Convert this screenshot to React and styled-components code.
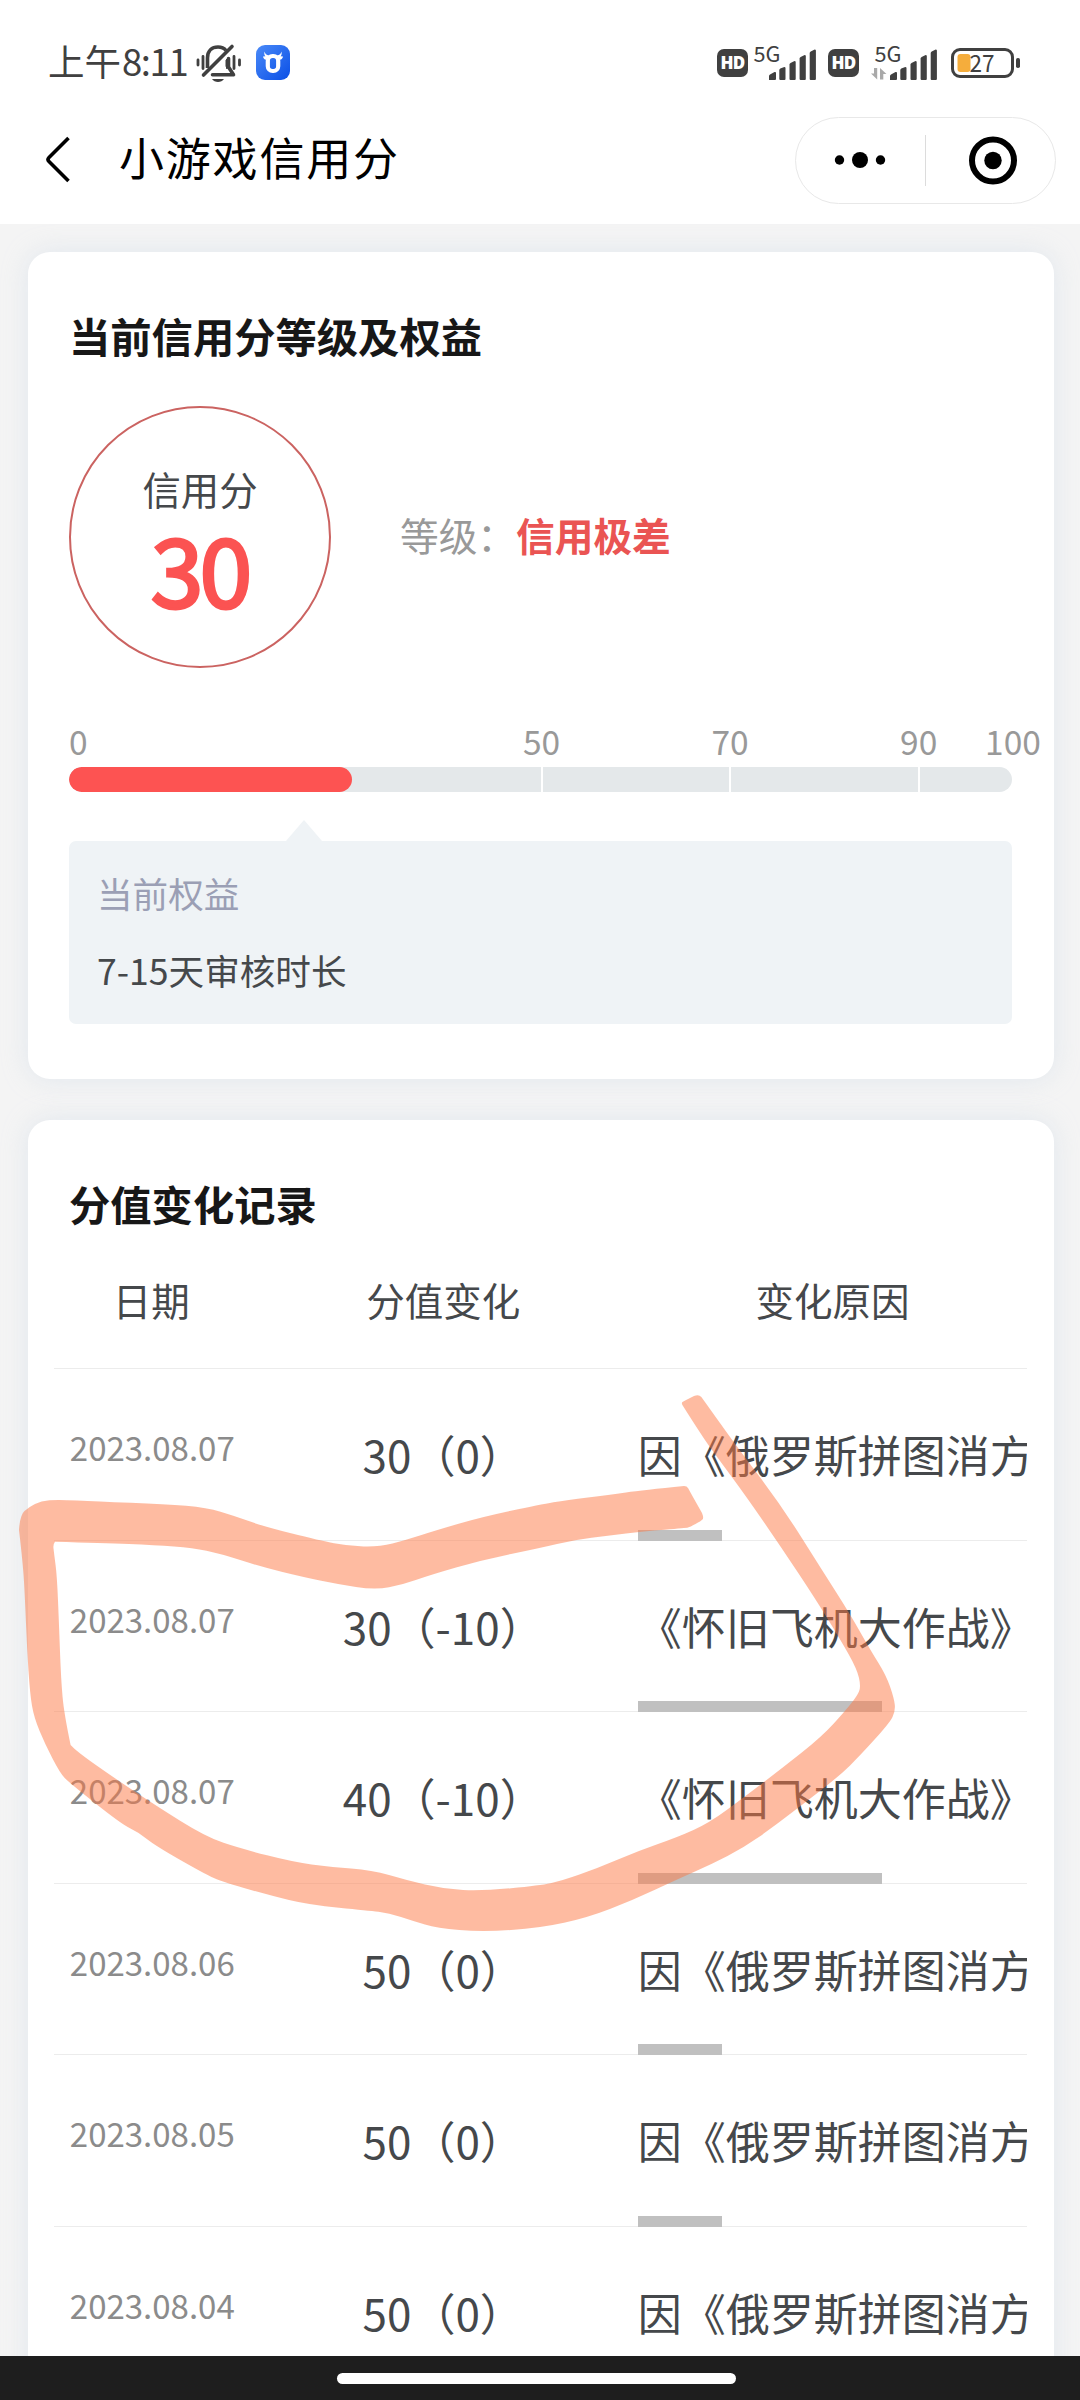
import styled, { createGlobalStyle } from 'styled-components'

const GlobalStyle = createGlobalStyle`
	* {
		box-sizing: border-box;
	}
	body {
		margin: 0;
		font-family: 'Noto Sans CJK SC', 'Noto Sans', sans-serif;
		color: #45484b;
		background-color: #f4f4f4;
	}
`
const Screen = styled.div`
	position: relative;
	display: flex;
	flex-direction: column;
	width: 1080px;
	height: 2400px;
	overflow: hidden;
	background-color: #f4f4f4;
`
const Header = styled.header`
	flex: none;
	background-color: #fff;
`
const StatusBar = styled.div`
	display: flex;
	align-items: center;
	justify-content: space-between;
	height: 96px;
	padding: 29px 60px 0 48px;
	color: #404040;
`
const StatusGroup = styled.div`
	display: flex;
	align-items: center;
`
const Clock = styled.div`
	width: 148px;
	font-size: 36.5px;
	line-height: 50px;
	white-space: nowrap;
	margin-top: -4px;
	span {
		letter-spacing: -1.4px;
		margin-left: 1px;
	}
`
const AppBadge = styled.svg`
	margin-left: 14px;
`
const HdBadge = styled.div`
	width: 31px;
	height: 28px;
	margin-right: ${props => props.$gap}px;
	border-radius: 7px;
	background-color: #404040;
	color: #fff;
	font: 800 17px/28px 'Open Sans', sans-serif;
	letter-spacing: -0.8px;
	text-align: center;
`
const Signal = styled.svg`
	margin-right: ${props => props.$gap}px;
	overflow: visible;
`
const Battery = styled.svg`
	display: block;
	overflow: visible;
`
const NavBar = styled.div`
	display: flex;
	align-items: center;
	height: 128px;
	padding: 0 24px 0 45px;
`
const NavTitle = styled.h1`
	flex: 1;
	margin: -7px 0 0 49px;
	font-size: 45px;
	font-weight: 400;
	line-height: 60px;
	letter-spacing: 1.8px;
	color: #000;
`
const Capsule = styled.div`
	display: flex;
	align-items: center;
	width: 261px;
	height: 87px;
	border: 1px solid #e8e8e8;
	border-radius: 44px;
`
const CapsuleDivider = styled.div`
	width: 1px;
	height: 51px;
	background-color: #dcdcdc;
`
const Main = styled.main`
	flex: 1;
	min-height: 0;
	overflow: hidden;
	display: flex;
	flex-direction: column;
	gap: 41px;
	padding: 28px 26px 0 28px;
`
const Card = styled.section`
	flex: none;
	padding: ${props => props.$padding};
	border-radius: 22px;
	background-color: #fff;
	box-shadow: 0 0 26px rgba(195, 210, 228, 0.38);
`
const CardTitle = styled.h2`
	margin: 0;
	padding-left: ${props => props.$indent || 0}px;
	font-size: 41.3px;
	font-weight: 700;
	line-height: 60px;
	color: #171717;
`
const Summary = styled.div`
	display: flex;
	align-items: center;
	margin-top: 41px;
`
const ScoreCircle = styled.div`
	display: flex;
	flex-direction: column;
	align-items: center;
	width: 262px;
	height: 262px;
	padding-top: 55px;
	border: 2px solid #cb6361;
	border-radius: 50%;
`
const ScoreLabel = styled.div`
	font-size: 38.4px;
	line-height: 50px;
`
const ScoreValue = styled.div`
	margin: 4px 0 0 -1px;
	font-size: 95px;
	line-height: 100px;
	letter-spacing: -4px;
	color: #fb5352;
	-webkit-text-stroke: 3px #fb5352;
`
const Level = styled.div`
	margin: -6px 0 0 69px;
	font-size: 38.7px;
	line-height: 50px;
	color: #999;
	strong {
		color: #ea5453;
	}
`
const Ticks = styled.div`
	display: flex;
	margin-top: 53px;
	font-size: 33.5px;
	line-height: 40px;
	color: #999;
`
const Tick = styled.div`
	flex: 0 0 ${props => props.$span}%;
	span {
		display: inline-block;
		transform: translateX(${props => (props.$first ? '0' : 'calc(-50% + 1px)')});
	}
`
const Track = styled.div`
	position: relative;
	display: flex;
	height: 25px;
	margin-top: 6px;
	border-radius: 13px;
	overflow: hidden;
	background-color: #e4e8ea;
`
const Segment = styled.div`
	flex: 0 0 ${props => props.$span}%;
	& + & {
		border-left: 2px solid #fff;
	}
`
const Fill = styled.div`
	position: absolute;
	top: 0;
	left: 0;
	width: ${props => props.$value}%;
	height: 100%;
	border-radius: 13px;
	background-color: #fd5352;
`
const Benefit = styled.div`
	position: relative;
	display: flex;
	flex-direction: column;
	gap: 27px;
	height: 183px;
	margin-top: 49px;
	padding: 27px 28px;
	border-radius: 7px;
	background-color: #eff3f6;
	font-size: 35.6px;
	line-height: 50px;
	&::before {
		content: '';
		position: absolute;
		left: 217px;
		bottom: 100%;
		border: 18px solid transparent;
		border-top: 0;
		border-bottom: 21px solid #eff3f6;
	}
`
const BenefitTitle = styled.div`
	color: #9b9fb5;
`
const columns = 'grid-template-columns: 1fr 2fr 2fr;'
const TableHead = styled.div`
	display: grid;
	${columns}
	align-items: center;
	height: 136px;
	padding-bottom: 4px;
	border-bottom: 1px solid #ececec;
	font-size: 38.5px;
	line-height: 50px;
	text-align: center;
`
const Row = styled.div`
	display: grid;
	${columns}
	height: 171.5px;
	border-bottom: 1px solid #ececec;
	font-size: 44px;
	line-height: 60px;
`
const DateCell = styled.div`
	padding: 53px 0 0 2px;
	font-size: 33px;
	line-height: 50px;
	text-align: center;
	color: #8b8b8b;
`
const ChangeCell = styled.div`
	padding-top: 55px;
	text-align: center;
`
const ReasonCell = styled.div`
	display: flex;
	flex-direction: column;
	justify-content: space-between;
	min-width: 0;
	padding-top: 55px;
`
const Reason = styled.div`
	overflow: hidden;
	white-space: nowrap;
`
const ScrollThumb = styled.div`
	width: ${props => props.$size}px;
	height: 11px;
	margin-bottom: -1px;
	background-color: #c0c0c0;
`
const GestureBar = styled.footer`
	flex: none;
	display: flex;
	align-items: center;
	justify-content: center;
	height: 44px;
	padding: 1px 7px 0 0;
	background-color: #1e1e1e;
	div {
		width: 399px;
		height: 11px;
		border-radius: 6px;
		background-color: #fff;
	}
`
const Marker = styled.svg`
	position: absolute;
	top: 0;
	left: 0;
	pointer-events: none;
`

const ticks = [
	{ label: '0', span: 50 },
	{ label: '50', span: 20 },
	{ label: '70', span: 20 },
	{ label: '90', span: 10 },
	{ label: '100', span: 0 }
]

const tetris = '因《俄罗斯拼图消方'
const plane = '《怀旧飞机大作战》'

const records = [
	{ date: '2023.08.07', change: '30（0）', reason: tetris, thumb: 84 },
	{ date: '2023.08.07', change: '30（-10）', reason: plane, thumb: 244 },
	{ date: '2023.08.07', change: '40（-10）', reason: plane, thumb: 244 },
	{ date: '2023.08.06', change: '50（0）', reason: tetris, thumb: 84 },
	{ date: '2023.08.05', change: '50（0）', reason: tetris, thumb: 84 },
	{ date: '2023.08.04', change: '50（0）', reason: tetris, thumb: 84 }
]

// edges of the highlighter stroke, each one is smoothed on its own so the corners stay sharp
const strokeEdges = [
	[[19, 1530], [20, 1515], [29, 1507], [41, 1501], [58, 1499.5], [96, 1501.5], [165, 1504], [207, 1507.7], [234, 1515.7], [262, 1526], [320, 1540.6], [348, 1546], [379, 1547], [406, 1540], [437, 1530], [482, 1517], [540, 1504.6], [567, 1500], [609, 1495], [643, 1490], [684, 1486]],
	[[684, 1486], [687, 1486], [689, 1490], [702, 1513]],
	[[702, 1513], [704, 1518], [701, 1521], [690, 1527], [686, 1528], [643, 1531.4], [609, 1535.6], [574, 1540], [540, 1548], [482, 1560], [430, 1575], [403, 1584.6], [375, 1590], [337, 1584], [303, 1577], [262, 1567], [220, 1553.6], [193, 1548], [155, 1545], [103, 1543], [55, 1541.7]],
	[[55, 1541.7], [53, 1544], [54, 1553], [57, 1576], [59, 1625], [61, 1679], [64, 1713.6], [70.6, 1745]],
	[[70.6, 1745], [76, 1751], [113.6, 1777.5], [155, 1805], [206, 1837], [241, 1848.7], [293, 1862], [330, 1867], [372, 1870], [406, 1880], [444, 1889], [482, 1891], [540, 1885.4], [561, 1881], [598, 1868], [638, 1851], [678, 1837], [709, 1823], [743, 1798], [781, 1769], [822, 1736.5], [846, 1710], [857, 1696], [861, 1687], [857, 1669], [840, 1639], [815.5, 1599], [781, 1547], [746.6, 1497], [715.6, 1455], [702, 1436], [683, 1406]],
	[[683, 1406], [681, 1403], [684, 1401], [694, 1396]],
	[[694, 1396], [699, 1394], [703.6, 1400], [736, 1445.7], [781, 1505], [822, 1570], [850, 1614], [870.6, 1650.4], [886, 1675], [894, 1698], [895.5, 1711], [889.5, 1723], [860, 1755.7], [839.6, 1775.6], [808.6, 1799.7], [774, 1826.5], [743, 1848], [712, 1864], [678, 1879], [633, 1900], [588, 1917.5], [540, 1928], [482, 1932], [437, 1928], [413, 1921], [389, 1913], [368, 1910.6], [310, 1905], [268, 1895], [220, 1881], [203, 1873], [155, 1845.6], [138, 1832], [122, 1824.5], [69, 1782.5], [60, 1773], [45, 1744], [34, 1717.4], [30, 1694], [27, 1648], [25, 1599], [23, 1564], [19, 1530]]
]

function smooth(points) {
	let d = ''
	for (let i = 1; i < points.length - 1; i++) {
		const [x, y] = points[i]
		const [nx, ny] = points[i + 1]
		const last = i === points.length - 2
		d += `Q${x} ${y} ${last ? nx : (x + nx) / 2} ${last ? ny : (y + ny) / 2}`
	}
	return d
}

const strokePath = `M19 1530${strokeEdges.map(smooth).join('')}Z`

function BellOffIcon() {
	return (
		<svg width="46" height="40" viewBox="0 0 46 40" fill="none" stroke="#404040" strokeWidth="3.6">
			<path d="M11.500 25V15C11.500 7.500 16 4 22 4c3 0 6 1 8 3.500" />
			<path d="M32.500 15.500v8.500l5 7.800H16.500" strokeLinejoin="round" strokeLinecap="round" />
			<path d="M30 17l1-1v10l-1-3z" strokeWidth="1" fill="#404040" />
			<path d="M7.500 32 36 3.500" strokeLinecap="round" />
			<path d="M16 36h12c-2.500 4-9.500 4-12 0z" fill="#404040" stroke="none" />
			<path d="M2 17v5M7 13.500v12M38 13.500v12M43.500 17v5" strokeWidth="2.800" strokeLinecap="round" />
		</svg>
	)
}

function CowIcon() {
	return (
		<AppBadge width="34" height="35" viewBox="0 0 34 35">
			<defs>
				<linearGradient id="cow" x1="0" y1="0" x2="1" y2="1">
					<stop offset="0" stopColor="#4a8af8" />
					<stop offset="1" stopColor="#0a4fe6" />
				</linearGradient>
			</defs>
			<rect width="34" height="35" rx="9" fill="url(#cow)" />
			<rect x="11.800" y="11" width="10.400" height="15" rx="4.800" fill="none" stroke="#fff" strokeWidth="4.200" />
			<path d="M8.600 6.500c-.5 2-.4 3.500.8 4.800L7 11.500c.3 2 1.500 3 3 3.200l3-4.200c-2.600-.4-4-1.700-4.400-4zM25.400 6.500c.5 2 .4 3.500-.8 4.800l2.400.2c-.3 2-1.500 3-3 3.200l-3-4.200c2.600-.4 4-1.700 4.400-4z" fill="#fff" />
		</AppBadge>
	)
}

function SignalIcon({ data, gap }) {
	return (
		<Signal $gap={gap} width="67" height="36" viewBox="0 0 67 36" fill="#404040">
			<text x="3.500" y="16.500" fontSize="21" fontFamily="'Noto Sans CJK SC', sans-serif" textLength="27" lengthAdjust="spacingAndGlyphs">5G</text>
			{data && (
				<g fill="#a9a9a9">
					<path d="M6.200 23v11.500L0 28.500h3V23zM9 34.500V23l6.500 6h-3.200v5.500z" />
				</g>
			)}
			<path d="M19 35v-4q0-1 1-1.500l4.500-2.500q1.500-.5 1.500 1V34q0 1-1 1z" />
			<path d="M29.300 34V25q0-1 1-1.500l4-1.500q1.200 0 1.200 1V34q0 1-1 1h-4.200q-1 0-1-1z" />
			<path d="M39.500 34V19.500q0-1 1-1.500l4-2q1.200 0 1.200 1V34q0 1-1 1h-4.200q-1 0-1-1z" />
			<path d="M49.600 34V13.500q0-1 1-1.500l4-2q1.200 0 1.200 1V34q0 1-1 1h-4.200q-1 0-1-1z" />
			<path d="M59.700 34V8q0-1 1-1.500l4-2q1.200 0 1.200 1V34q0 1-1 1h-4.200q-1 0-1-1z" />
		</Signal>
	)
}

function BatteryIcon() {
	return (
		<Battery width="69" height="30" viewBox="0 0 69 30">
			<rect x="1.500" y="1.500" width="60" height="27" rx="7.500" fill="none" stroke="#404040" strokeWidth="3" />
			<rect x="65" y="10" width="4" height="10" rx="1.800" fill="#404040" />
			<rect x="6.500" y="6" width="13" height="18" rx="3" fill="#f5ad3c" />
			<text x="18.500" y="24" fontSize="24" fontFamily="'Noto Sans CJK SC', sans-serif" fill="#404040" textLength="25" lengthAdjust="spacingAndGlyphs">27</text>
		</Battery>
	)
}

export default function App() {
	return (
		<Screen>
			<GlobalStyle />
			<Header>
				<StatusBar>
					<StatusGroup>
						<Clock>
							上午<span>8:11</span>
						</Clock>
						<BellOffIcon />
						<CowIcon />
					</StatusGroup>
					<StatusGroup>
						<HdBadge $gap={2}>HD</HdBadge>
						<SignalIcon gap={11} />
						<HdBadge $gap={12}>HD</HdBadge>
						<SignalIcon data gap={13} />
						<BatteryIcon />
					</StatusGroup>
				</StatusBar>
				<NavBar>
					<svg width="25" height="48" viewBox="0 0 25 48" fill="none" stroke="#000" strokeWidth="3.600">
						<path d="M23.500 2 4 21.500q-2 2 0 4L23.500 45" />
					</svg>
					<NavTitle>小游戏信用分</NavTitle>
					<Capsule>
						<svg width="129" height="60" viewBox="0 0 129 60">
							<circle cx="43.500" cy="30" r="4.700" />
							<circle cx="64" cy="30" r="8" />
							<circle cx="84.500" cy="30" r="4.700" />
						</svg>
						<CapsuleDivider />
						<svg width="129" height="60" viewBox="0 0 129 60">
							<circle cx="67" cy="30.500" r="21" fill="none" stroke="#000" strokeWidth="6" />
							<circle cx="67" cy="30.500" r="8.700" />
						</svg>
					</Capsule>
				</NavBar>
			</Header>
			<Main>
				<Card $padding="53px 42px 55px 41px">
					<CardTitle>当前信用分等级及权益</CardTitle>
					<Summary>
						<ScoreCircle>
							<ScoreLabel>信用分</ScoreLabel>
							<ScoreValue>30</ScoreValue>
						</ScoreCircle>
						<Level>
							等级：<strong>信用极差</strong>
						</Level>
					</Summary>
					<Ticks>
						{ticks.map((tick, i) => (
							<Tick key={tick.label} $span={tick.span} $first={i === 0}>
								<span>{tick.label}</span>
							</Tick>
						))}
					</Ticks>
					<Track>
						{ticks.slice(0, 4).map(tick => (
							<Segment key={tick.label} $span={tick.span} />
						))}
						<Fill $value={30} />
					</Track>
					<Benefit>
						<BenefitTitle>当前权益</BenefitTitle>
						<div>7-15天审核时长</div>
					</Benefit>
				</Card>
				<Card $padding="53px 27px 0 26px">
					<CardTitle $indent={15}>分值变化记录</CardTitle>
					<TableHead>
						<div>日期</div>
						<div>分值变化</div>
						<div>变化原因</div>
					</TableHead>
					{records.map((record, i) => (
						<Row key={i}>
							<DateCell>{record.date}</DateCell>
							<ChangeCell>{record.change}</ChangeCell>
							<ReasonCell>
								<Reason>{record.reason}</Reason>
								<ScrollThumb $size={record.thumb} />
							</ReasonCell>
						</Row>
					))}
				</Card>
			</Main>
			<GestureBar>
				<div />
			</GestureBar>
			<Marker width="1080" height="2400" viewBox="0 0 1080 2400">
				<path d={strokePath} fill="#fd7743" fillOpacity="0.5" />
			</Marker>
		</Screen>
	)
}
